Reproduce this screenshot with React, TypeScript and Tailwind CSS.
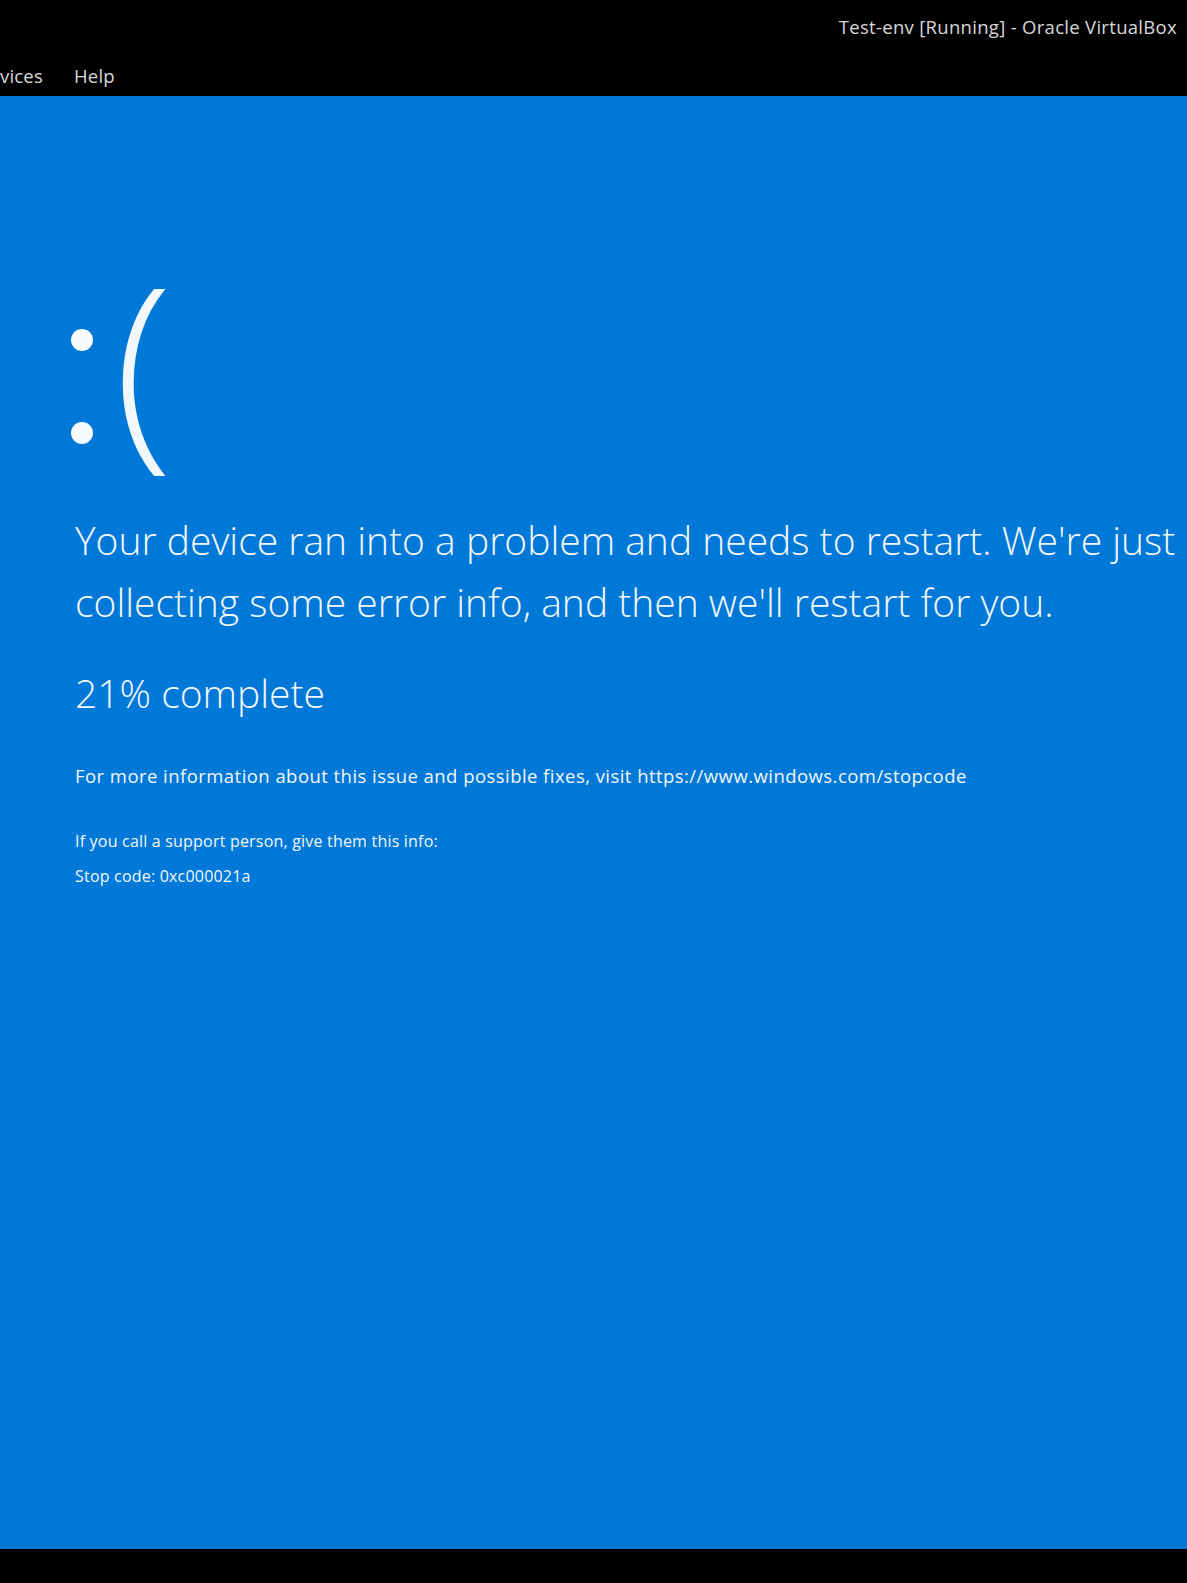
import React from 'react';

const font = { fontFamily: '"Open Sans", "Noto Sans", "Liberation Sans", sans-serif' };

export default function App() {
  return (
    <div className="flex h-[1583px] w-[1187px] flex-col overflow-hidden bg-black text-white" style={font}>
      {/* VirtualBox window chrome */}
      <div className="flex h-[96px] shrink-0 flex-col bg-black">
        <div className="flex h-[54px] items-center justify-end pr-[10px] text-[18.5px] tracking-[0.3px] text-[#d8d8d8]">
          Test-env [Running] - Oracle VirtualBox
        </div>
        <div className="flex h-[42px] items-start gap-[31px] pt-[8px] text-[18.5px] tracking-[0.2px] text-[#d8d8d8]">
          <span>vices</span>
          <span>Help</span>
        </div>
      </div>

      {/* Guest screen */}
      <div className="flex flex-1 flex-col bg-[#0078d7] pl-[75px] text-[#f2f7fc]">
        {/* sad face */}
        <div className="-ml-[4px] mt-[155px] flex h-[215px] items-start">
          <div className="mt-[78px] flex flex-col gap-[71px]">
            <div className="h-[22px] w-[22px] rounded-full bg-[#f7fafd]" />
            <div className="h-[22px] w-[22px] rounded-full bg-[#f7fafd]" />
          </div>
          <span className="ml-[21px] text-[215px] font-light leading-none">(</span>
        </div>

        <div className="mt-[43px] whitespace-nowrap text-[39px] font-light leading-[62px]">
          <div>Your device ran into a problem and needs to restart. We're just</div>
          <div>collecting some error info, and then we'll restart for you.</div>
        </div>

        <div className="mt-[29px] text-[39px] font-light leading-[62px]">21% complete</div>

        <div className="mt-[40px] whitespace-nowrap text-[18.5px] tracking-[0.45px] leading-[24px]">
          For more information about this issue and possible fixes, visit https://www.windows.com/stopcode
        </div>

        <div className="mt-[43px] flex flex-col gap-[15px] text-[16px] tracking-[0.2px] leading-[20px]">
          <div>If you call a support person, give them this info:</div>
          <div>Stop code: 0xc000021a</div>
        </div>
      </div>

      <div className="h-[34px] shrink-0 bg-black" />
    </div>
  );
}
